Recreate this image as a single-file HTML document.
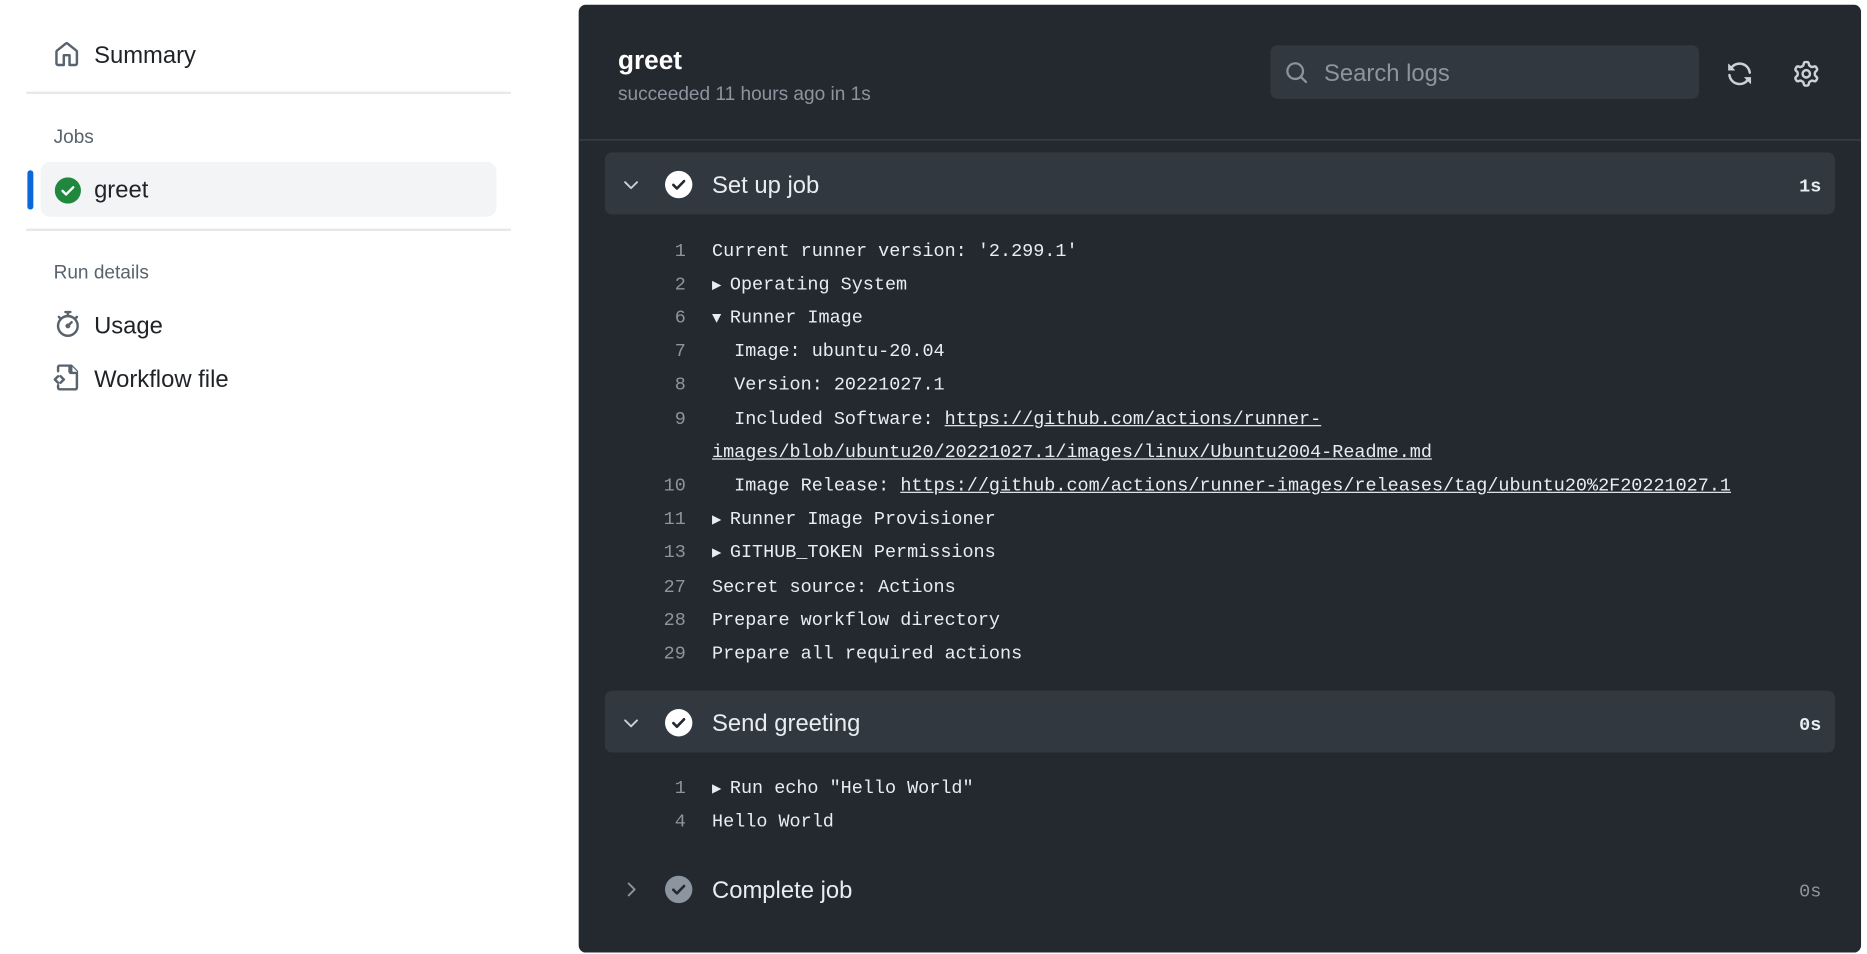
<!DOCTYPE html>
<html><head><meta charset="utf-8"><style>
html,body{margin:0;padding:0;width:1867px;height:954px;overflow:hidden;background:#fff;}
#w{position:absolute;left:0;top:0;width:1568px;height:801px;transform:scale(1.19069);transform-origin:0 0;font-family:"Liberation Sans",sans-serif;}
.a{position:absolute;}
.side{color:#1f2328;font-size:20px;margin-top:2px;}
.lbl{color:#59636e;font-size:16px;margin-top:2px;}
.hr{position:absolute;left:22px;width:407px;height:2px;background:#e6e9ec;}
#panel{left:486px;top:4px;width:1077px;height:796px;background:#24292f;border-radius:6px;}
.step{position:absolute;left:22px;width:1033px;height:52px;border-radius:6px;}
.mono{font-family:"Liberation Mono",monospace;font-size:15.5px;color:#e6edf3;margin-top:2px;}
.ln{position:absolute;width:28px;text-align:right;color:#8c959f;left:62px;}
.tx{position:absolute;left:112px;white-space:pre;}
.tx a{color:#e6edf3;text-decoration:underline;}
.tri{display:inline-block;width:15px;font-size:13px;}
.ht{margin-top:2px;}
</style></head><body><div id="w">
<svg class="a" style="left:45px;top:35px" width="22" height="22" viewBox="0 0 16 16"><path fill="#59636e" d="M6.906.664a1.749 1.749 0 0 1 2.187 0l5.25 4.2c.415.332.657.835.657 1.367v7.019A1.75 1.75 0 0 1 13.25 15h-3.5a.75.75 0 0 1-.75-.75V9H7v5.25a.75.75 0 0 1-.75.75h-3.5A1.75 1.75 0 0 1 1 13.25V6.23c0-.531.242-1.034.657-1.366l5.25-4.2Zm1.25 1.171a.25.25 0 0 0-.312 0l-5.25 4.2a.25.25 0 0 0-.094.196v7.019c0 .138.112.25.25.25H5.5V8.25a.75.75 0 0 1 .75-.75h3.5a.75.75 0 0 1 .75.75v5.25h2.75a.25.25 0 0 0 .25-.25V6.23a.25.25 0 0 0-.094-.195Z"/></svg>
<div class="a side" style="left:79px;top:34px">Summary</div>
<div class="hr" style="top:77px"></div>
<div class="a lbl" style="left:45px;top:105px">Jobs</div>
<div class="a" style="left:34px;top:136px;width:383px;height:46px;background:#f3f4f6;border-radius:8px"></div>
<div class="a" style="left:23px;top:143px;width:5px;height:33px;background:#0969da;border-radius:3px"></div>
<svg class="a" style="left:46px;top:149px" width="22" height="22" viewBox="0 0 22 22"><circle cx="11" cy="11" r="11" fill="#1f883d"/><path d="M6.5 11.3l3 3 6-6" stroke="#fff" stroke-width="2" fill="none" stroke-linecap="round" stroke-linejoin="round"/></svg>
<div class="a side" style="left:79px;top:147px">greet</div>
<div class="hr" style="top:192px"></div>
<div class="a lbl" style="left:45px;top:219px">Run details</div>
<svg class="a" style="left:46px;top:261px" width="22" height="22" viewBox="0 0 16 16"><path fill="#59636e" d="M5.75.75A.75.75 0 0 1 6.5 0h3a.75.75 0 0 1 0 1.5h-.75v1l-.001.041a6.724 6.724 0 0 1 3.464 1.435l.007-.006.75-.75a.749.749 0 0 1 1.275.326.749.749 0 0 1-.215.734l-.75.75-.006.007a6.75 6.75 0 1 1-10.548 0L2.72 5.03l-.75-.75a.751.751 0 0 1 .018-1.042.751.751 0 0 1 1.042-.018l.75.75.007.006A6.72 6.72 0 0 1 7.25 2.541V1.5H6.5a.75.75 0 0 1-.75-.75ZM8 14.5A5.250 5.25 0 1 0 8 4a5.25 5.25 0 0 0 0 10.5Zm.389-6.7 1.33-1.33a.75.75 0 1 1 1.061 1.06L9.45 8.861A1.503 1.503 0 0 1 8 10.75a1.499 1.499 0 1 1 .389-2.950Z"/></svg>
<div class="a side" style="left:79px;top:261px">Usage</div>
<svg class="a" style="left:45px;top:306px" width="22" height="22" viewBox="0 0 16 16"><path fill="#59636e" d="M2 1.75C2 .784 2.784 0 3.75 0h6.586c.464 0 .909.184 1.237.513l2.914 2.914c.329.328.513.773.513 1.237v9.586A1.75 1.75 0 0 1 13.25 16h-9.5A1.75 1.75 0 0 1 2 14.25v-1.5a.75.75 0 0 1 1.5 0v1.5c0 .138.112.25.25.25h9.5a.25.25 0 0 0 .25-.25V6h-2.75A1.75 1.75 0 0 1 9 4.25V1.5H3.75a.25.25 0 0 0-.25.25v2.5a.75.75 0 0 1-1.5 0Zm1.72 4.97a.75.75 0 0 1 1.06 0l2 2a.75.75 0 0 1 0 1.060l-2 2a.749.749 0 0 1-1.275-.326.749.749 0 0 1 .215-.734l1.47-1.470-1.47-1.47a.75.75 0 0 1 0-1.06ZM3.28 7.78 1.81 9.25l1.47 1.47a.751.751 0 0 1-.018 1.042.751.751 0 0 1-1.042.018l-2-2a.75.75 0 0 1 0-1.060l2-2a.751.751 0 0 1 1.042.018.751.751 0 0 1 .018 1.042Zm8.22-6.218V4.25c0 .138.112.25.25.25h2.688l-.011-.013-2.914-2.914-.013-.011Z"/></svg>
<div class="a side" style="left:79px;top:306px">Workflow file</div>

<div id="panel" class="a">
<div class="a ht" style="left:33px;top:32px;color:#fff;font-size:22px;font-weight:bold">greet</div>
<div class="a ht" style="left:33px;top:65px;color:#8c959f;font-size:16px">succeeded 11 hours ago in 1s</div>
<div class="a" style="left:581px;top:34px;width:360px;height:45px;background:#32383f;border-radius:6px"></div>
<svg class="a" style="left:593px;top:47px" width="20" height="20" viewBox="0 0 16 16"><path fill="#8c959f" d="M10.68 11.74a6 6 0 0 1-7.922-8.982 6 6 0 0 1 8.982 7.922l3.04 3.04a.749.749 0 0 1-.326 1.275.749.749 0 0 1-.734-.215ZM11.5 7a4.499 4.499 0 1 0-8.997 0A4.499 4.499 0 0 0 11.5 7Z"/></svg>
<div class="a ht" style="left:626px;top:45px;color:#8c959f;font-size:20px">Search logs</div>
<svg class="a" style="left:964px;top:47px" width="22" height="22" viewBox="0 0 16 16"><path fill="#c9d1d9" d="M1.705 8.005a.75.75 0 0 1 .834.656 5.5 5.5 0 0 0 9.592 2.97l-1.204-1.204a.25.25 0 0 1 .177-.427h3.646a.25.25 0 0 1 .25.25v3.646a.25.25 0 0 1-.427.177l-1.38-1.38A7.002 7.002 0 0 1 1.05 8.84a.75.75 0 0 1 .656-.834ZM8 2.5a5.487 5.487 0 0 0-4.131 1.869l1.204 1.204A.25.25 0 0 1 4.896 6H1.25A.25.25 0 0 1 1 5.75V2.104a.25.25 0 0 1 .427-.177l1.38 1.38A7.002 7.002 0 0 1 14.95 7.16a.75.75 0 0 1-1.49.178A5.5 5.5 0 0 0 8 2.5Z"/></svg>
<svg class="a" style="left:1020px;top:47px" width="22" height="22" viewBox="0 0 16 16"><path fill="#c9d1d9" d="M8 0a8.2 8.2 0 0 1 .701.031C9.444.095 9.99.645 10.16 1.29l.288 1.107c.018.066.079.158.212.224.231.114.454.243.668.386.123.082.233.09.299.071l1.103-.303c.644-.176 1.392.021 1.82.63.27.385.506.792.704 1.218.315.675.111 1.422-.364 1.891l-.814.806c-.049.048-.098.147-.088.294.016.257.016.515 0 .772-.01.147.038.246.088.294l.814.806c.475.469.679 1.216.364 1.891a7.977 7.977 0 0 1-.704 1.217c-.428.61-1.176.807-1.82.63l-1.102-.302c-.067-.019-.177-.011-.3.071a5.909 5.909 0 0 1-.668.386c-.133.066-.194.158-.211.224l-.29 1.106c-.168.646-.715 1.196-1.458 1.26a8.006 8.006 0 0 1-1.402 0c-.743-.064-1.289-.614-1.458-1.26l-.289-1.106c-.018-.066-.079-.158-.212-.224a5.738 5.738 0 0 1-.668-.386c-.123-.082-.233-.09-.299-.071l-1.103.303c-.644.176-1.392-.021-1.82-.63a8.12 8.12 0 0 1-.704-1.218c-.315-.675-.111-1.422.363-1.891l.815-.806c.05-.048.098-.147.088-.294a6.214 6.214 0 0 1 0-.772c.01-.147-.038-.246-.088-.294l-.815-.806C.635 6.045.431 5.298.746 4.623a7.92 7.92 0 0 1 .704-1.217c.428-.61 1.176-.807 1.82-.63l1.102.302c.067.019.177.011.3-.071.214-.143.437-.272.668-.386.133-.066.194-.158.211-.224l.29-1.106C6.009.645 6.556.095 7.299.03 7.530.01 7.764 0 8 0Zm-.571 1.525c-.036.003-.108.036-.137.146l-.289 1.105c-.147.561-.549.967-.998 1.189-.173.086-.34.183-.5.29-.417.278-.97.423-1.529.27l-1.103-.303c-.109-.03-.175.016-.195.045-.22.312-.412.644-.573.99-.014.031-.021.11.059.19l.815.806c.411.406.562.957.53 1.456a4.709 4.709 0 0 0 0 .582c.032.499-.119 1.05-.53 1.456l-.815.806c-.081.08-.073.159-.059.19.162.346.353.677.573.989.02.03.085.076.195.046l1.102-.303c.56-.153 1.113-.008 1.53.27.161.107.328.204.501.29.447.222.85.629.997 1.189l.289 1.105c.029.109.101.143.137.146a6.6 6.6 0 0 0 1.142 0c.036-.003.108-.036.137-.146l.289-1.105c.147-.561.549-.967.998-1.189.173-.086.34-.183.5-.29.417-.278.97-.423 1.529-.27l1.103.303c.109.029.175-.016.195-.045.22-.313.411-.644.573-.99.014-.031.021-.11-.059-.19l-.815-.806c-.411-.406-.562-.957-.53-1.456a4.709 4.709 0 0 0 0-.582c-.032-.499.119-1.05.53-1.456l.815-.806c.081-.08.073-.159.059-.19a6.464 6.464 0 0 0-.573-.989c-.02-.03-.085-.076-.195-.046l-1.102.303c-.56.153-1.113.008-1.53-.27a4.44 4.44 0 0 0-.501-.29c-.447-.222-.85-.629-.997-1.189l-.289-1.105c-.029-.11-.101-.143-.137-.146a6.6 6.6 0 0 0-1.142 0ZM11 8a3 3 0 1 1-6 0 3 3 0 0 1 6 0ZM9.5 8a1.5 1.5 0 1 0-3.001.001A1.5 1.5 0 0 0 9.5 8Z"/></svg>
<div class="a" style="left:0;top:113px;width:1077px;height:1px;background:#3d444d"></div>

<div class="step" style="top:124px;background:#32383f"></div>
<svg class="a" style="left:36px;top:143px" width="16" height="16" viewBox="0 0 16 16"><path d="M3 6l5 5 5-5" stroke="#c9d1d9" stroke-width="1.6" fill="none" stroke-linecap="round" stroke-linejoin="round"/></svg>
<svg class="a" style="left:72px;top:139px" width="24" height="24" viewBox="0 0 24 24"><circle cx="12" cy="12" r="11.5" fill="#fff"/><path d="M7.5 12.3l3 3 6-6.2" stroke="#24292f" stroke-width="2.2" fill="none" stroke-linecap="round" stroke-linejoin="round"/></svg>
<div class="a ht" style="left:112px;top:139px;color:#e6edf3;font-size:20px">Set up job</div>
<div class="a mono" style="left:1025px;top:142px;font-weight:bold;color:#e6edf3">1s</div>

<div class="a mono" style="left:0;top:196px;width:1077px">
<div class="ln" style="top:0">1</div><div class="tx" style="top:0">Current runner version: '2.299.1'</div>
<div class="ln" style="top:28px">2</div><div class="tx" style="top:28px"><span class="tri">▶</span>Operating System</div>
<div class="ln" style="top:56px">6</div><div class="tx" style="top:56px"><span class="tri">▼</span>Runner Image</div>
<div class="ln" style="top:84px">7</div><div class="tx" style="top:84px">  Image: ubuntu-20.04</div>
<div class="ln" style="top:112px">8</div><div class="tx" style="top:112px">  Version: 20221027.1</div>
<div class="ln" style="top:141px">9</div><div class="tx" style="top:141px">  Included Software: <a>https://github.com/actions/runner-</a></div>
<div class="tx" style="top:169px"><a>images/blob/ubuntu20/20221027.1/images/linux/Ubuntu2004-Readme.md</a></div>
<div class="ln" style="top:197px">10</div><div class="tx" style="top:197px">  Image Release: <a>https://github.com/actions/runner-images/releases/tag/ubuntu20%2F20221027.1</a></div>
<div class="ln" style="top:225px">11</div><div class="tx" style="top:225px"><span class="tri">▶</span>Runner Image Provisioner</div>
<div class="ln" style="top:253px">13</div><div class="tx" style="top:253px"><span class="tri">▶</span>GITHUB_TOKEN Permissions</div>
<div class="ln" style="top:282px">27</div><div class="tx" style="top:282px">Secret source: Actions</div>
<div class="ln" style="top:310px">28</div><div class="tx" style="top:310px">Prepare workflow directory</div>
<div class="ln" style="top:338px">29</div><div class="tx" style="top:338px">Prepare all required actions</div>
</div>

<div class="step" style="top:576px;background:#32383f"></div>
<svg class="a" style="left:36px;top:595px" width="16" height="16" viewBox="0 0 16 16"><path d="M3 6l5 5 5-5" stroke="#c9d1d9" stroke-width="1.6" fill="none" stroke-linecap="round" stroke-linejoin="round"/></svg>
<svg class="a" style="left:72px;top:591px" width="24" height="24" viewBox="0 0 24 24"><circle cx="12" cy="12" r="11.5" fill="#fff"/><path d="M7.5 12.3l3 3 6-6.2" stroke="#24292f" stroke-width="2.2" fill="none" stroke-linecap="round" stroke-linejoin="round"/></svg>
<div class="a ht" style="left:112px;top:591px;color:#e6edf3;font-size:20px">Send greeting</div>
<div class="a mono" style="left:1025px;top:594px;font-weight:bold">0s</div>
<div class="a mono" style="left:0;top:647px;width:1077px">
<div class="ln" style="top:0">1</div><div class="tx" style="top:0"><span class="tri">▶</span>Run echo "Hello World"</div>
<div class="ln" style="top:28px">4</div><div class="tx" style="top:28px">Hello World</div>
</div>

<svg class="a" style="left:36px;top:735px" width="16" height="16" viewBox="0 0 16 16"><path d="M6 3l5 5-5 5" stroke="#8c959f" stroke-width="1.6" fill="none" stroke-linecap="round" stroke-linejoin="round"/></svg>
<svg class="a" style="left:72px;top:731px" width="24" height="24" viewBox="0 0 24 24"><circle cx="12" cy="12" r="11.5" fill="#8c959f"/><path d="M7.5 12.3l3 3 6-6.2" stroke="#24292f" stroke-width="2.2" fill="none" stroke-linecap="round" stroke-linejoin="round"/></svg>
<div class="a ht" style="left:112px;top:731px;color:#e6edf3;font-size:20px">Complete job</div>
<div class="a mono" style="left:1025px;top:734px;color:#8c959f">0s</div>
</div>
</div></body></html>
